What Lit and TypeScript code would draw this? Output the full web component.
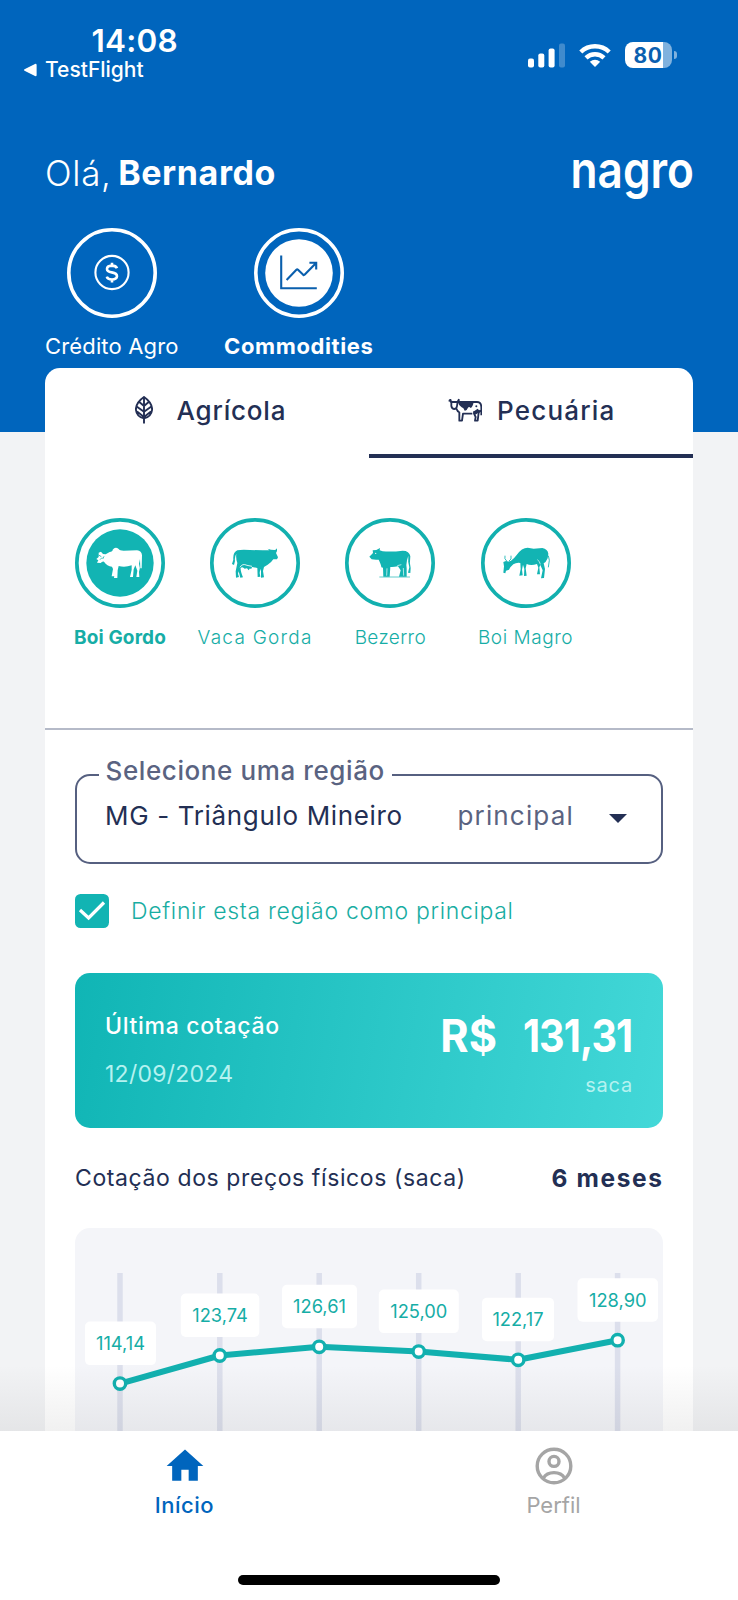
import { LitElement, html, svg, css } from "lit";
import { customElement } from "lit/decorators.js";
import { classMap } from "lit/directives/class-map.js";

interface Animal {
  name: string;
  cls: string;
  view: string;
  art: unknown;
}

const ANIMALS: Animal[] = [
  {
    name: "Boi Gordo",
    cls: "boi-gordo",
    view: "76 55 270 270",
    art: svg`
      <path d="M147,159 L154,156 L160,163 L168,164 L180,157 Q189,156 189,150 Q197,139 207,148 Q210,153 222,153 L262,152 Q276,153 277,167 L276,206 L272,206 L271,178 L268,192 Q273,205 268,217 L269,232 L260,232 L263,213 L257,197 L252,209 L250,232 L241,232 L246,210 L246,197 Q226,204 207,199 L204,212 L203,235 L193,235 L196,213 L194,229 L186,230 L190,208 L187,201 Q172,199 163,186 Q158,184 153,190 L142,189 L146,182 L140,178 L147,172 Z"/>
      <path d="M147,166 l8,5 M151,180 l6,-6 M163,170 l-4,8" fill="none" stroke="#12b4b3" stroke-width="2.5"/>`,
  },
  {
    name: "Vaca Gorda",
    cls: "vaca-gorda",
    view: "481 55 270 270",
    art: svg`
      <path d="M563,152 Q576,149 600,151 L640,152 Q652,152 659,152 L654,147 L664,150 L674,151 L678,150 L682,146 L682,154 L679,160 L685,173 L682,179 L671,179 Q664,190 654,195 L643,202 L640,214 L643,233 L634,234 L634,215 L632,207 L630,220 L632,231 L624,232 L623,205 L607,202 Q605,212 601,206 L597,212 L592,206 L585,207 Q578,199 573,205 Q572,213 580,233 L572,234 L567,215 L565,222 L568,232 L559,234 L558,215 L563,190 Q558,178 560,162 Q554,172 556,184 L553,196 L547,193 L551,180 Q549,158 563,152 Z"/>
      <path d="M571,203 Q578,190 592,197 L607,200" fill="none" stroke="#fff" stroke-width="2.5"/>`,
  },
  {
    name: "Bezerro",
    cls: "bezerro",
    view: "77 55 270 270",
    art: svg`
      <path d="M150,171 L161,160 L160,152 L171,151 L182,145 L181,152 L190,155 Q220,157 250,153 Q270,153 273,170 Q270,190 274,205 L273,220 L266,219 L270,203 Q265,185 267,168 L263,182 Q260,196 262,206 L262,231 L239,231 L244,212 L236,200 Q222,203 213,202 L211,231 L192,231 L191,204 L186,203 Q186,196 178,180 L170,180 L157,179 Z"/>
      <path d="M180,232 H272" fill="none" stroke="#12b4b3" stroke-width="2"/>
      <path d="M203,206 L202,228 M252,205 L253,228 M234,198 L246,195" fill="none" stroke="#fff" stroke-width="2"/>
      <circle cx="169" cy="161" r="2" fill="#fff"/>`,
  },
  {
    name: "Boi Magro",
    cls: "boi-magro",
    view: "482 55 270 270",
    art: svg`
      <path d="M549,187 L557,184 Q566,187 572,183 Q582,176 589,166 Q604,144 622,144 L640,147 L666,145 Q682,148 684,162 L682,176 Q677,188 670,191 L674,208 L671,235 L662,236 L667,212 L660,196 L657,203 L659,224 L650,224 L654,204 L650,193 Q632,199 619,193 L616,206 L619,228 L611,229 L612,208 L608,195 L605,210 L607,227 L597,228 L601,208 L600,190 Q588,188 579,194 L570,203 L566,210 L557,213 L555,221 L549,219 L551,200 Z"/>
      <path d="M559,184 Q551,178 554,168 M566,184 Q575,180 572,168 M684,168 L687,182 L684,203" fill="none" stroke="#12b4b3" stroke-width="2.6"/>
      <path d="M651,180 Q658,184 660,194" fill="none" stroke="#fff" stroke-width="2"/>`,
  },
];

interface Quote {
  value: string;
  x: number;
  y: number;
  left: number;
  width: number;
}

const QUOTES: Quote[] = [
  { value: "114,14", x: 45, y: 155.6, left: 10, width: 71 },
  { value: "123,74", x: 144.8, y: 127.5, left: 105.8, width: 78.5 },
  { value: "126,61", x: 244.2, y: 118.8, left: 207, width: 75 },
  { value: "125,00", x: 343.7, y: 123.6, left: 303.8, width: 80 },
  { value: "122,17", x: 443.2, y: 131.8, left: 407, width: 72 },
  { value: "128,90", x: 542.6, y: 112.2, left: 502.5, width: 80.5 },
];

@customElement("app-root")
export class AppRoot extends LitElement {
  static styles = css`
    :host {
      display: block;
      font-family: Inter, "Open Sans", sans-serif;
      color: #232f54;
    }
    svg { display: block; flex: none; }
    .screen { display: flex; flex-direction: column; height: 1600px; overflow: hidden; background: #f2f3f5; }
    .scroll { position: relative; height: 1430.5px; overflow: hidden; flex: none; }
    .shade {
      position: absolute; inset: auto 0 0 0; height: 66px;
      background: linear-gradient(rgba(40, 40, 40, 0), rgba(40, 40, 40, 0.065));
    }

    .header { box-sizing: border-box; height: 432px; background: #0065bd; color: #fff; padding: 21px 45px 0; }
    .status { display: flex; justify-content: space-between; margin: 0 16px 0 -22px; height: 132px; }
    .time { font-size: 31.5px; font-weight: 600; line-height: 40px; padding-left: 68.5px; letter-spacing: 0.2px; }
    .back { display: flex; align-items: center; gap: 8px; font-size: 21px; font-weight: 500; line-height: 17px; }
    .signals { display: flex; align-items: center; gap: 14px; height: 26px; padding-top: 21px; }
    .battery { display: flex; align-items: center; gap: 2px; }
    .battery-body {
      width: 47px; height: 26px; border-radius: 8px; text-align: center; padding-right: 1px; box-sizing: border-box;
      background: linear-gradient(90deg, #fff 80%, #80b2de 80%);
      color: #0a5fb0; font-weight: 700; font-size: 21px; line-height: 27px; letter-spacing: 0.5px;
    }
    .battery-tip { width: 3px; height: 8px; border-radius: 0 4px 4px 0; background: #80b2de; }

    .greeting { display: flex; justify-content: space-between; height: 40px; }
    .hello { font-size: 34px; line-height: 40px; white-space: nowrap; display: flex; gap: 6.5px; }
    .hello-light { font-weight: 300; font-size: 35px; letter-spacing: 0.7px; }
    .hello-name { font-weight: 700; letter-spacing: 0.6px; }
    .logo { overflow: visible; }
    .logo-text { font-size: 51px; font-weight: 600; fill: #fff; }

    .shortcuts { display: flex; gap: 45.5px; padding-top: 35px; }
    .shortcut { display: flex; flex-direction: column; align-items: center; gap: 15px; font-size: 22px; line-height: 26px; white-space: nowrap; }
    .shortcut-credit { letter-spacing: 0.15px; }
    .shortcut-commodities { font-weight: 700; letter-spacing: 0.6px; }

    .card { margin: -64px 45px 0; background: #fff; border-radius: 15px 15px 0 0; height: 1200px; }
    .tabs { display: grid; grid-template-columns: 1fr 1fr; }
    .tab { box-sizing: border-box; height: 90px; display: flex; align-items: center; border-bottom: 4px solid transparent; font-size: 26px; font-weight: 500; padding-bottom: 2px; }
    .tab-agricola { padding-left: 90px; gap: 23.5px; letter-spacing: 0.8px; }
    .tab-pecuaria { padding-left: 79px; gap: 15px; letter-spacing: 1.2px; }
    .tab.active { border-bottom-color: #232f54; }

    .animals { display: flex; box-sizing: border-box; height: 272px; padding: 60px 0 0 7.4px; border-bottom: 2px solid #b5bac8; }
    .animal { width: 135.2px; display: flex; flex-direction: column; align-items: center; gap: 18px; color: #12b4b3; font-size: 19px; font-weight: 300; line-height: 24px; }
    .animal-name { white-space: nowrap; color: #16ada6; }
    .animal.selected .animal-name { font-weight: 700; }
    .boi-gordo { letter-spacing: 0.15px; }
    .vaca-gorda { letter-spacing: 1.25px; }
    .bezerro { letter-spacing: 0.35px; }
    .boi-magro { letter-spacing: 0.55px; }

    .body { padding: 0 30.5px 0 30px; }
    .region { margin: 26px 0 0; padding: 0 0 22px 21.5px; border: 2px solid #566080; border-radius: 15px; min-width: 0; }
    .region-label { padding: 0 7px 8px 7px; line-height: 30px; font-size: 26px; font-weight: 500; letter-spacing: 0.6px; color: #5a6381; }
    .region-row { display: flex; align-items: center; height: 42px; padding: 0 34px 4px 6.5px; font-size: 26px; white-space: nowrap; }
    .region-value { letter-spacing: 0.66px; width: 352.5px; }
    .region-main { letter-spacing: 1.15px; color: #5a6381; flex: 1; }
    .caret { margin-top: 6px; }
    .check { display: flex; align-items: center; gap: 22px; height: 34px; margin-top: 30px; font-size: 23px; font-weight: 300; letter-spacing: 0.68px; color: #18ada2; white-space: nowrap; }
    .check-text { padding-bottom: 1px; }

    .quote {
      display: flex; justify-content: space-between; box-sizing: border-box; height: 155px; margin-top: 45px; padding: 0 30.5px 0 30px;
      border-radius: 15px; color: #fff; background: linear-gradient(100deg, #10b5b5, #43d8d8);
    }
    .quote-left { padding-top: 38px; display: flex; flex-direction: column; gap: 18px; line-height: 30px; }
    .quote-title { font-size: 23px; font-weight: 500; letter-spacing: 0.7px; }
    .quote-date { font-size: 23px; letter-spacing: 0.25px; color: #b5f2f0; }
    .quote-right { padding-top: 38px; display: flex; flex-direction: column; align-items: flex-end; }
    .price { display: flex; gap: 11px; font-weight: 700; font-size: 45px; line-height: 50px; }
    .currency { transform: scaleX(0.96); transform-origin: right; }
    .amount { transform: scaleX(0.88); transform-origin: right; letter-spacing: -1px; }
    .unit { font-size: 20px; line-height: 24px; letter-spacing: 0.8px; padding-top: 12px; margin-right: -1px; color: #b5f2f0; }

    .section { display: flex; justify-content: space-between; align-items: center; height: 30px; margin-top: 35px; font-size: 23px; letter-spacing: 0.6px; white-space: nowrap; }
    .period { font-weight: 700; font-size: 24.5px; letter-spacing: 1.6px; margin-right: -1px; }
    .chart { margin-top: 35px; border-radius: 15px; background: #f4f5f9; height: 400px; overflow: hidden; }
    .chart-text { font-size: 18.3px; fill: #16ada6; text-anchor: middle; }

    .nav { box-sizing: border-box; height: 169.5px; background: #fff; display: flex; flex-direction: column; align-items: center; justify-content: space-between; padding: 13.5px 0 15px; }
    .nav-items { align-self: stretch; display: grid; grid-template-columns: 1fr 1fr; }
    .nav-item { display: flex; flex-direction: column; align-items: center; gap: 4.5px; font-size: 22px; line-height: 24px; color: #a5a5a5; }
    .nav-item.active { color: #0065bd; font-weight: 500; letter-spacing: 0.5px; }
    .home-bar { width: 262px; height: 10px; border-radius: 5px; background: #000; }
  `;

  private renderAnimal(a: Animal, i: number) {
    const selected = i === 0;
    const [vx, vy] = a.view.split(" ").map(Number);
    const cx = vx + 135;
    const cy = vy + 135;
    return html`
      <div class=${classMap({ animal: true, selected })}>
        <svg width="90" height="90" viewBox=${a.view}>
          <circle cx=${cx} cy=${cy} r="129.5" fill="none" stroke="#12b0af" stroke-width="11" />
          ${selected ? svg`<circle cx=${cx} cy=${cy} r="101" fill="#12b4b3" />` : ""}
          <g fill=${selected ? "#fff" : "#12b4b3"}>${a.art}</g>
        </svg>
        <div class="animal-name ${a.cls}">${a.name}</div>
      </div>
    `;
  }

  private renderChart() {
    const line = QUOTES.map((q) => `${q.x},${q.y}`).join(" ");
    return html`
      <svg width="588" height="400" viewBox="0 0 588 400">
        ${QUOTES.map((q) => svg`<rect x=${q.x - 2.75} y="45" width="5.5" height="355" fill="#dcdfec" />`)}
        <polyline points=${line} fill="none" stroke="#12b0af" stroke-width="6" stroke-linejoin="round" />
        ${QUOTES.map(
          (q) => svg`
            <rect x=${q.left} y=${q.y - 62} width=${q.width} height="43.5" rx="5" fill="#fff" />
            <text class="chart-text" x=${q.left + q.width / 2} y=${q.y - 33.7}>${q.value}</text>
            <circle cx=${q.x} cy=${q.y} r="5.7" fill="#fff" stroke="#12b0af" stroke-width="3.4" />`
        )}
      </svg>
    `;
  }

  render() {
    return html`
      <div class="screen">
        <div class="scroll">
          <div class="header">
            <div class="status">
              <div>
                <div class="time">14:08</div>
                <div class="back">
                  <svg width="14" height="14" viewBox="0 0 14 14"><path d="M1.5 6.2 L12 .9 Q13.6 .4 13.6 2 V12 Q13.6 13.6 12 13.1 L1.5 7.8 Q.2 7 1.5 6.2Z" fill="#fff" /></svg>
                  <span>TestFlight</span>
                </div>
              </div>
              <div class="signals">
                <svg width="37" height="25" viewBox="0 0 37 25" fill="#fff">
                  <rect x="0" y="15.5" width="6" height="9" rx="2" />
                  <rect x="10.3" y="10.5" width="6" height="14" rx="2" />
                  <rect x="20.6" y="5.5" width="6" height="19" rx="2" />
                  <rect x="31" y="0.5" width="6" height="24" rx="2" opacity=".25" />
                </svg>
                <svg width="32" height="25" viewBox="0 0 32 25" fill="none" stroke="#fff" stroke-width="4.4">
                  <path d="M1.8 9 A20.5 20.5 0 0 1 30.2 9" />
                  <path d="M7 14.8 A13 13 0 0 1 25 14.8" />
                  <path d="M16 24 L10.8 18.8 Q16 14.6 21.2 18.8Z" fill="#fff" stroke="none" />
                </svg>
                <div class="battery"><div class="battery-body">80</div><div class="battery-tip"></div></div>
              </div>
            </div>
            <div class="greeting">
              <div class="hello"><span class="hello-light">Olá,</span><span class="hello-name">Bernardo</span></div>
              <svg class="logo" width="123" height="50" viewBox="0 0 123 50">
                <text class="logo-text" x="0.5" y="34.5" textLength="123.5" lengthAdjust="spacingAndGlyphs">nagro</text>
              </svg>
            </div>
            <div class="shortcuts">
              <div class="shortcut shortcut-credit">
                <svg width="90" height="90" viewBox="0 0 90 90" fill="none" stroke="#fff">
                  <circle cx="45" cy="45" r="43.2" stroke-width="3.6" />
                  <circle cx="45" cy="44.5" r="16.6" stroke-width="2.1" />
                  <path d="M50 40.2 Q49 37.6 44.8 37.6 Q40 37.8 40 41 Q40 43.6 44.8 44.4 Q50 45.2 50 48.2 Q49.8 51.4 45 51.5 Q40.6 51.4 39.8 48.6 M45 34.8 V38 M45 51 V54.4" stroke-width="2.6" />
                </svg>
                <span>Crédito Agro</span>
              </div>
              <div class="shortcut shortcut-commodities">
                <svg width="90" height="90" viewBox="0 0 90 90" fill="none" stroke="#fff">
                  <circle cx="45" cy="45" r="43.2" stroke-width="3.6" />
                  <circle cx="45" cy="45" r="33.8" fill="#fff" stroke="none" />
                  <path d="M27.2 27.5 V60.2 H62.8" stroke="#0a5fad" stroke-width="2.1" />
                  <path d="M32.6 52 L42.4 41.8 Q43.2 41 44 41.8 L49.2 46.8 Q50 47.4 50.8 46.6 L61.6 35.4 M55.4 34.7 H62.2 V41.4" stroke="#0a5fad" stroke-width="2.1" />
                </svg>
                <span>Commodities</span>
              </div>
            </div>
          </div>

          <div class="card">
            <div class="tabs">
              <div class="tab tab-agricola">
                <svg width="18" height="28" viewBox="0 0 18 28" fill="none" stroke="#232f54" stroke-width="1.9">
                  <path d="M9 1 Q17.1 6.5 17.1 13.5 Q16.6 20.6 9 22.4 Q1.4 20.6 .9 13.5 Q.9 6.5 9 1Z M9 1 V27.5 M9 10 L4.6 6.3 M9 10 L13.4 6.3 M9 15.8 L2 10.8 M9 15.8 L16 10.8 M9 21 L2 15.6 M9 21 L16 15.6" />
                </svg>
                <span>Agrícola</span>
              </div>
              <div class="tab tab-pecuaria active">
                <svg width="34" height="24" viewBox="233 148 102 72" fill="none" stroke="#232f54" stroke-width="5.5" stroke-linejoin="round">
                  <path d="M235 155 L243 158 L243 172 Q245 181 252 181 Q259 180 260 172 L262 158 L267 153 M240 151 L241 160 H262 L266 151 M257 160 H320 Q333 160 333 176 V200 M258 180 Q262 190 267 191 V216 H275 L278 195 H306 M330 185 L325 192 L322 216 H314 L316 205 L311 195 V188" />
                  <path d="M262 159 H310 Q308 174 301 178 Q296 173 293 177 Q289 187 283 186 Q280 177 274 176 Q265 170 262 159Z M311 188 L322 180 L329 188 L320 195 L311 200Z" fill="#232f54" stroke="none" />
                  <circle cx="318" cy="173" r="3" fill="#232f54" stroke="none" />
                </svg>
                <span>Pecuária</span>
              </div>
            </div>

            <div class="animals">${ANIMALS.map((a, i) => this.renderAnimal(a, i))}</div>

            <div class="body">
              <fieldset class="region">
                <legend class="region-label">Selecione uma região</legend>
                <div class="region-row">
                  <span class="region-value">MG - Triângulo Mineiro</span>
                  <span class="region-main">principal</span>
                  <svg class="caret" width="18" height="9" viewBox="0 0 18 9"><path d="M0 0 H18 L9 9Z" fill="#232f54" /></svg>
                </div>
              </fieldset>

              <div class="check">
                <svg width="34" height="34" viewBox="0 0 34 34">
                  <rect width="34" height="34" rx="5.5" fill="#12b4b3" />
                  <path d="M5 16 L13.6 24 L29 8.5" fill="none" stroke="#fff" stroke-width="3.2" />
                </svg>
                <span class="check-text">Definir esta região como principal</span>
              </div>

              <div class="quote">
                <div class="quote-left">
                  <div class="quote-title">Última cotação</div>
                  <div class="quote-date">12/09/2024</div>
                </div>
                <div class="quote-right">
                  <div class="price"><span class="currency">R$</span><span class="amount">131,31</span></div>
                  <div class="unit">saca</div>
                </div>
              </div>

              <div class="section">
                <span>Cotação dos preços físicos (saca)</span>
                <span class="period">6 meses</span>
              </div>
              <div class="chart">${this.renderChart()}</div>
            </div>
          </div>
          <div class="shade"></div>
        </div>

        <div class="nav">
          <div class="nav-items">
            <div class="nav-item active">
              <svg width="44" height="44" viewBox="0 0 24 24" fill="currentColor"><path d="M10 20v-6h4v6h5v-8h3L12 3 2 12h3v8z" /></svg>
              <span>Início</span>
            </div>
            <div class="nav-item">
              <svg width="44" height="44" viewBox="0 0 44 44" fill="none" stroke="currentColor" stroke-width="3.4">
                <circle cx="22" cy="22" r="16.8" />
                <circle cx="22" cy="17.4" r="5" />
                <path d="M11.5 34 Q14.5 28.6 22 28.6 Q29.5 28.6 32.5 34" />
              </svg>
              <span>Perfil</span>
            </div>
          </div>
          <div class="home-bar"></div>
        </div>
      </div>
    `;
  }
}
